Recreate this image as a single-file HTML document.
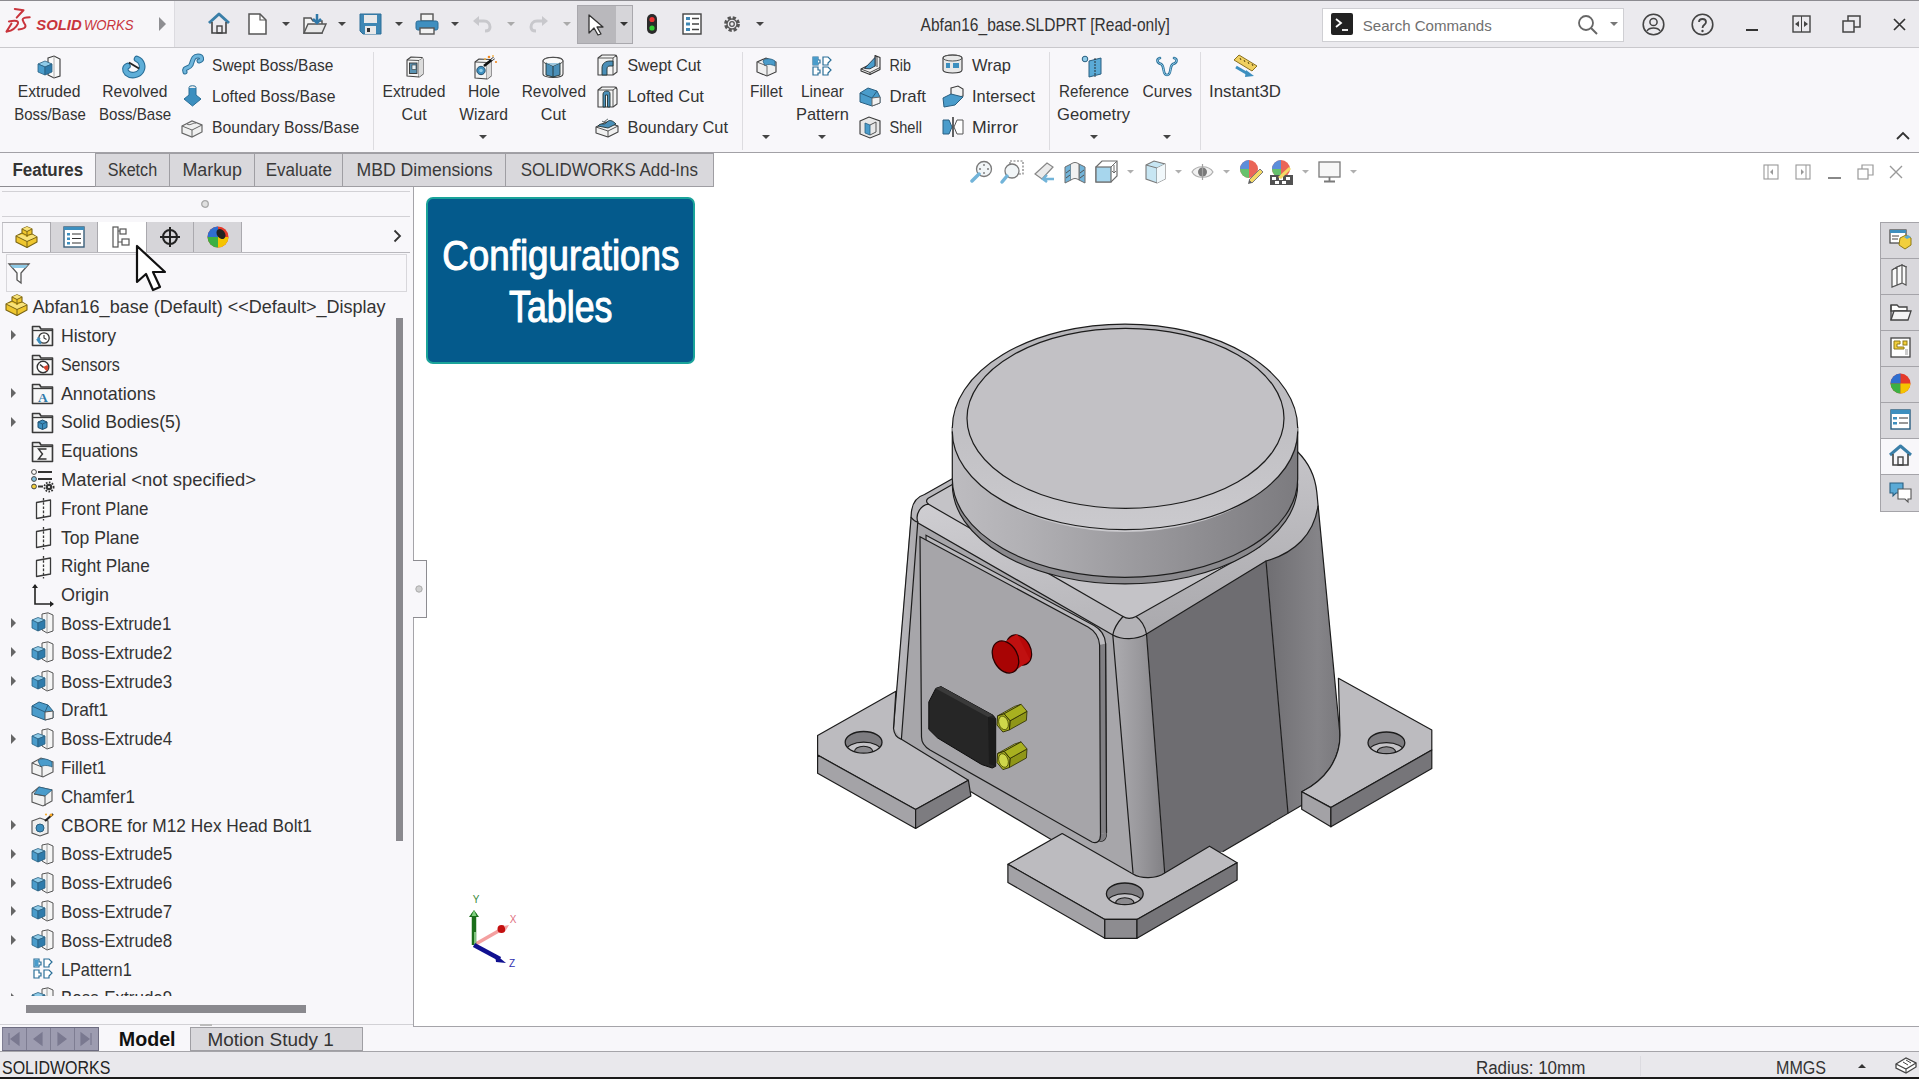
<!DOCTYPE html><html><head><meta charset="utf-8"><style>
html,body{margin:0;padding:0;width:1919px;height:1079px;overflow:hidden;background:#fff;position:relative}
.t{position:absolute;white-space:nowrap;font-family:"Liberation Sans",sans-serif;line-height:1;transform-origin:0 0}
svg{overflow:visible}
</style></head><body>
<div style="position:absolute;left:0px;top:0px;width:1919px;height:48px;background:#ebeaee;"></div>
<div style="position:absolute;left:0px;top:0px;width:1919px;height:1px;background:#8c8b90;"></div>
<div style="position:absolute;left:0px;top:1px;width:174px;height:46px;background:#f7f6f9;"></div>
<div style="position:absolute;left:174px;top:1px;width:1px;height:46px;background:#dcdbe0;"></div>
<div style="position:absolute;left:0px;top:47px;width:1919px;height:1px;background:#c9c8cc;"></div>
<svg style="position:absolute;left:0px;top:0px;" width="32" height="34" viewBox="0 0 32 34"><g fill="none" stroke="#c9343c" stroke-width="2" stroke-linecap="round" stroke-linejoin="round"><path d="M14.8 9 L23.5 10.3 Q20 14 16.7 17.6"/><path d="M8.9 21.4 Q19.5 19.3 17.8 23.8 Q15 30 7 31.5 M11.5 23.5 L6.5 31.6"/><path d="M29.7 17.2 Q22.5 17.2 22.6 19.8 Q23.5 22.5 25.3 25 Q26.6 28.8 18.6 29.4"/></g></svg>
<svg style="position:absolute;left:159px;top:17px;" width="8" height="14" viewBox="0 0 8 14"><path d="M0 0L7 7L0 14Z" fill="#8e8e92"/></svg>
<svg style="position:absolute;left:207px;top:12px;" width="24" height="23" viewBox="0 0 24 23"><path d="M2 11L12 2L22 11" fill="none" stroke="#3a7fa8" stroke-width="3" stroke-linejoin="round"/><path d="M5 10V21H19V10" fill="none" stroke="#444" stroke-width="1.6"/><rect x="10" y="14" width="5" height="7" fill="none" stroke="#444" stroke-width="1.4"/></svg>
<svg style="position:absolute;left:248px;top:13px;" width="19" height="22" viewBox="0 0 19 22"><path d="M1 1H12L18 7V21H1Z" fill="#fff" stroke="#555" stroke-width="1.5"/><path d="M12 1V7H18" fill="none" stroke="#555" stroke-width="1.2"/></svg>
<svg style="position:absolute;left:282px;top:22px;" width="8" height="4" viewBox="0 0 8 4"><path d="M0 0H8L4 4Z" fill="#444"/></svg>
<svg style="position:absolute;left:303px;top:13px;" width="24" height="22" viewBox="0 0 24 22"><path d="M1 5H8L10 8H19V20H1Z" fill="#f4f4f4" stroke="#555" stroke-width="1.5"/><path d="M1 20L5 11H23L19 20Z" fill="#e8e8e8" stroke="#555" stroke-width="1.4"/><path d="M14 1V9M10 6L14 10L18 6" fill="none" stroke="#2f78a8" stroke-width="2.5"/></svg>
<svg style="position:absolute;left:338px;top:22px;" width="8" height="4" viewBox="0 0 8 4"><path d="M0 0H8L4 4Z" fill="#444"/></svg>
<svg style="position:absolute;left:359px;top:13px;" width="23" height="22" viewBox="0 0 23 22"><path d="M1 1H22V21H4L1 18Z" fill="#3f87b4" stroke="#2d6f98" stroke-width="1"/><rect x="5" y="2" width="13" height="8" fill="#e9e9ea"/><rect x="6" y="13" width="11" height="8" fill="#e9e9ea"/><rect x="8" y="15" width="3" height="4" fill="#333"/></svg>
<svg style="position:absolute;left:395px;top:22px;" width="8" height="4" viewBox="0 0 8 4"><path d="M0 0H8L4 4Z" fill="#444"/></svg>
<svg style="position:absolute;left:415px;top:13px;" width="24" height="22" viewBox="0 0 24 22"><rect x="6" y="1" width="12" height="7" fill="#f2f2f2" stroke="#555" stroke-width="1.4"/><rect x="1" y="8" width="22" height="9" rx="2" fill="#3f8fc0" stroke="#2d6f98"/><rect x="5" y="15" width="14" height="6" fill="#f2f2f2" stroke="#555" stroke-width="1.4"/></svg>
<svg style="position:absolute;left:451px;top:22px;" width="8" height="4" viewBox="0 0 8 4"><path d="M0 0H8L4 4Z" fill="#444"/></svg>
<svg style="position:absolute;left:472px;top:15px;" width="20" height="17" viewBox="0 0 20 17"><path d="M4 6H12C16 6 18 9 18 12C18 15 16 16 13 16" fill="none" stroke="#c8c8cc" stroke-width="3"/><path d="M1 6L7 1V11Z" fill="#c8c8cc"/></svg>
<svg style="position:absolute;left:507px;top:22px;" width="8" height="4" viewBox="0 0 8 4"><path d="M0 0H8L4 4Z" fill="#aaa"/></svg>
<svg style="position:absolute;left:529px;top:15px;" width="20" height="17" viewBox="0 0 20 17"><path d="M16 6H8C4 6 2 9 2 12C2 15 4 16 7 16" fill="none" stroke="#c8c8cc" stroke-width="3"/><path d="M19 6L13 1V11Z" fill="#c8c8cc"/></svg>
<svg style="position:absolute;left:563px;top:22px;" width="8" height="4" viewBox="0 0 8 4"><path d="M0 0H8L4 4Z" fill="#aaa"/></svg>
<div style="position:absolute;left:577px;top:5px;width:56px;height:39px;background:#d6d5d9;border:1px solid #a9a8ad;box-sizing:border-box;"></div>
<div style="position:absolute;left:578px;top:6px;width:38px;height:37px;background:#b9b8bc;"></div>
<svg style="position:absolute;left:588px;top:14px;" width="16" height="22" viewBox="0 0 16 22"><path d="M1 1V19L6 14L10 21L13 20L9 13H15Z" fill="#fff" stroke="#333" stroke-width="1.3" stroke-linejoin="round"/></svg>
<svg style="position:absolute;left:620px;top:22px;" width="8" height="4" viewBox="0 0 8 4"><path d="M0 0H8L4 4Z" fill="#333"/></svg>
<svg style="position:absolute;left:646px;top:13px;" width="12" height="22" viewBox="0 0 12 22"><rect x="1" y="1" width="10" height="20" rx="5" fill="#2b2b2b"/><circle cx="6" cy="6.5" r="2.6" fill="#e33"/><circle cx="6" cy="15" r="2.6" fill="#3c3"/></svg>
<svg style="position:absolute;left:682px;top:13px;" width="20" height="22" viewBox="0 0 20 22"><rect x="1" y="1" width="18" height="20" fill="#fff" stroke="#444" stroke-width="1.4"/><rect x="4" y="4" width="4" height="3" fill="#3f87b4"/><rect x="4" y="9.5" width="4" height="3" fill="#3f87b4"/><rect x="4" y="15" width="4" height="3" fill="#3f87b4"/><path d="M10 5.5H17M10 11H17M10 16.5H17" stroke="#444" stroke-width="1.3"/></svg>
<svg style="position:absolute;left:721px;top:13px;" width="22" height="22" viewBox="0 0 22 22"><circle cx="11" cy="11" r="6.5" fill="none" stroke="#555" stroke-width="2.8" stroke-dasharray="3.2 1.9"/><circle cx="11" cy="11" r="5" fill="none" stroke="#555" stroke-width="1.3"/><circle cx="11" cy="11" r="2.3" fill="none" stroke="#555" stroke-width="1.3"/></svg>
<svg style="position:absolute;left:756px;top:22px;" width="8" height="4" viewBox="0 0 8 4"><path d="M0 0H8L4 4Z" fill="#444"/></svg>
<div style="position:absolute;left:1322px;top:8px;width:302px;height:34px;background:#fff;border:1px solid #cfcfd3;box-sizing:border-box;"></div>
<svg style="position:absolute;left:1331px;top:13px;" width="22" height="22" viewBox="0 0 22 22"><rect x="0" y="0" width="22" height="22" rx="2" fill="#222"/><path d="M5 6L10 10L5 14" fill="none" stroke="#fff" stroke-width="1.8"/><path d="M11 17H17" stroke="#fff" stroke-width="1.8"/></svg>
<svg style="position:absolute;left:1577px;top:14px;" width="24" height="22" viewBox="0 0 24 22"><circle cx="9" cy="9" r="7" fill="none" stroke="#666" stroke-width="1.8"/><path d="M14 14L20 20" stroke="#666" stroke-width="2"/></svg>
<svg style="position:absolute;left:1610px;top:22px;" width="8" height="4" viewBox="0 0 8 4"><path d="M0 0H8L4 4Z" fill="#777"/></svg>
<svg style="position:absolute;left:1642px;top:13px;" width="23" height="23" viewBox="0 0 23 23"><circle cx="11.5" cy="11.5" r="10.3" fill="none" stroke="#444" stroke-width="1.6"/><circle cx="11.5" cy="9" r="3.6" fill="none" stroke="#444" stroke-width="1.5"/><path d="M5 18C7 14 16 14 18 18" fill="none" stroke="#444" stroke-width="1.5"/></svg>
<svg style="position:absolute;left:1691px;top:13px;" width="23" height="23" viewBox="0 0 23 23"><circle cx="11.5" cy="11.5" r="10.3" fill="none" stroke="#444" stroke-width="1.6"/><path d="M8 9C8 5 15 5 15 9C15 12 11.5 11.5 11.5 15" fill="none" stroke="#444" stroke-width="1.8"/><circle cx="11.5" cy="18" r="1.2" fill="#444"/></svg>
<div style="position:absolute;left:1746px;top:29px;width:12px;height:2px;background:#333;"></div>
<svg style="position:absolute;left:1792px;top:15px;" width="19" height="18" viewBox="0 0 19 18"><rect x="1" y="1" width="17" height="16" fill="none" stroke="#444" stroke-width="1.4"/><path d="M9.5 1V17" stroke="#444" stroke-width="1"/><path d="M3 9L7 6V12Z M16 9L12 6V12Z" fill="#444"/></svg>
<svg style="position:absolute;left:1842px;top:15px;" width="19" height="18" viewBox="0 0 19 18"><rect x="1" y="6" width="11" height="11" fill="none" stroke="#444" stroke-width="1.5"/><path d="M6 6V1H18V12H12" fill="none" stroke="#444" stroke-width="1.5"/></svg>
<svg style="position:absolute;left:1893px;top:18px;" width="13" height="13" viewBox="0 0 13 13"><path d="M1 1L12 12M12 1L1 12" stroke="#333" stroke-width="1.7"/></svg>
<div style="position:absolute;left:0px;top:48px;width:1919px;height:105px;background:#f8f7fa;"></div>
<div style="position:absolute;left:373px;top:52px;width:1px;height:98px;background:#dddce0;"></div>
<div style="position:absolute;left:742px;top:52px;width:1px;height:98px;background:#dddce0;"></div>
<div style="position:absolute;left:1049px;top:52px;width:1px;height:98px;background:#dddce0;"></div>
<div style="position:absolute;left:1200px;top:52px;width:1px;height:98px;background:#dddce0;"></div>
<svg style="position:absolute;left:37px;top:55px;" width="25" height="23" viewBox="0 0 25 23"><path d="M11 3L17 1L23 4V21L17 23L11 20Z" fill="#fafafa" stroke="#3a3a3a" stroke-width="1.1"/><path d="M17 1V23" stroke="#999" stroke-width="0.8"/><path d="M1 9L8 6L15 9L8 12Z" fill="#8fcbe8" stroke="#2a5f80" stroke-width="0.8"/><path d="M1 9L8 12V20L1 17Z" fill="#4a9ccb" stroke="#2a5f80" stroke-width="0.8"/><path d="M8 12L15 9V17L8 20Z" fill="#2f7bab" stroke="#2a5f80" stroke-width="0.8"/></svg>
<svg style="position:absolute;left:122px;top:54px;" width="24" height="25" viewBox="0 0 24 25"><path d="M15 5 C20 7 21.5 13 19 17 C16 21.5 9 22.5 5 19 C2.5 16.5 3 13 5.5 12" fill="none" stroke="#2a6f98" stroke-width="6.6" stroke-linecap="round"/><path d="M15 5 C20 7 21.5 13 19 17 C16 21.5 9 22.5 5 19 C2.5 16.5 3 13 5.5 12" fill="none" stroke="#5eaed8" stroke-width="4.4" stroke-linecap="round"/><path d="M7 8.5 L17 14.5" stroke="#222" stroke-width="1.9"/></svg>
<svg style="position:absolute;left:181px;top:53px;" width="23" height="23" viewBox="0 0 23 23"><path d="M4 19C2 14 8 16 10 12C12 7 12 3 17 3C21 3 22 7 18 8" fill="none" stroke="#2a6f98" stroke-width="5" stroke-linecap="round"/><path d="M4 19C2 14 8 16 10 12C12 7 12 3 17 3C21 3 22 7 18 8" fill="none" stroke="#6fb6dc" stroke-width="3" stroke-linecap="round"/></svg>
<svg style="position:absolute;left:183px;top:85px;" width="19" height="22" viewBox="0 0 19 22"><ellipse cx="9.5" cy="2.5" rx="3.5" ry="1.8" fill="#eee" stroke="#2a6f98"/><path d="M6 3V10L1 14L9.5 21L18 14L13 10V3" fill="#3d8fbf" stroke="#2a6f98" stroke-width="1"/></svg>
<svg style="position:absolute;left:180px;top:116px;" width="24" height="22" viewBox="0 0 24 22"><path d="M2 10L12 5L22 9V16L12 21L2 17Z" fill="#f0f0f0" stroke="#666" stroke-width="1.2"/><path d="M2 10L12 14L22 9M12 14V21M7 8C10 10 12 7 16 7" fill="none" stroke="#666" stroke-width="1"/></svg>
<svg style="position:absolute;left:404px;top:55px;" width="22" height="24" viewBox="0 0 22 24"><path d="M3 5 L7 2 L18 2.5 L19 4 V19 L15 22 L3 21 Z" fill="#f4f4f4" stroke="#444" stroke-width="1.1" stroke-linejoin="round"/><path d="M3 5 L15 5.5 L19 3 M15 5.5 V22" fill="none" stroke="#444" stroke-width="0.9"/><path d="M15 5.5 L19 3 V19 L15 22 Z" fill="#dcdcdc"/><rect x="5.5" y="8" width="7.5" height="10.5" fill="#5b93b3" stroke="#333" stroke-width="0.9"/><rect x="8" y="10" width="4" height="4.5" fill="#e8f2f8" stroke="#333" stroke-width="0.6"/></svg>
<svg style="position:absolute;left:472px;top:55px;" width="26" height="25" viewBox="0 0 26 25"><g transform="translate(0 2)"><path d="M3 5 L7 2 L18 2.5 L19 4 V19 L15 22 L3 21 Z" fill="#f4f4f4" stroke="#444" stroke-width="1.1" stroke-linejoin="round"/><path d="M3 5 L15 5.5 L19 3 M15 5.5 V22" fill="none" stroke="#444" stroke-width="0.9"/><path d="M15 5.5 L19 3 V19 L15 22 Z" fill="#dcdcdc"/><circle cx="9" cy="13.5" r="4.2" fill="#3d8fbf" stroke="#2a4f6a" stroke-width="1"/><circle cx="9" cy="13.5" r="1.8" fill="#8fcbe8"/></g><path d="M12 11 L22 3" stroke="#111" stroke-width="2.6"/><path d="M19.5 5 L22 3" stroke="#f0f0f0" stroke-width="1.5"/><circle cx="17" cy="2" r="1.3" fill="#f08a24"/><circle cx="24" cy="7" r="1.1" fill="#f08a24"/><circle cx="21" cy="1" r="0.9" fill="#f5b041"/><circle cx="13" cy="4" r="1" fill="#f5b041"/></svg>
<svg style="position:absolute;left:479px;top:135px;" width="8" height="4" viewBox="0 0 8 4"><path d="M0 0H8L4 4Z" fill="#444"/></svg>
<svg style="position:absolute;left:541px;top:55px;" width="24" height="24" viewBox="0 0 24 24"><path d="M2 6 C2 1 22 1 22 6 V19 C22 23.5 2 23.5 2 19 Z" fill="#f4f4f4" stroke="#444" stroke-width="1.1"/><ellipse cx="12" cy="6" rx="10" ry="3.6" fill="#fafafa" stroke="#444" stroke-width="0.9"/><path d="M5 8 L12 11 L19 8 V20 L12 22 L5 20 Z" fill="#4a8fb8" stroke="#233" stroke-width="0.9"/><path d="M12 11 V22" stroke="#233" stroke-width="0.9"/><path d="M5 8 L12 11 L19 8" fill="#9cc8e0"/></svg>
<svg style="position:absolute;left:596px;top:53px;" width="23" height="24" viewBox="0 0 23 24"><path d="M2 5 L6 2 L19 2 L21 4 V19 L17 22 L2 22 Z" fill="#f4f4f4" stroke="#444" stroke-width="1.1" stroke-linejoin="round"/><path d="M2 5 H17 L21 2 M17 5 V22" fill="none" stroke="#444" stroke-width="0.9"/><path d="M6 22 V15 C6 10 10 8 14 8 H17 V13 H14 C12 13 11 14 11 16 V22 Z" fill="#4a8fb8" stroke="#233" stroke-width="0.9"/></svg>
<svg style="position:absolute;left:596px;top:85px;" width="23" height="24" viewBox="0 0 23 24"><path d="M2 5 L6 2 L19 2 L21 4 V19 L17 22 L2 22 Z" fill="#f4f4f4" stroke="#444" stroke-width="1.1" stroke-linejoin="round"/><path d="M2 5 H17 L21 2 M17 5 V22" fill="none" stroke="#444" stroke-width="0.9"/><path d="M7 22 V9 C7 7 9 6 11 6 C13 6 14 7 14 9 V22 H11.5 V10 H9.5 V22 Z" fill="#4a8fb8" stroke="#233" stroke-width="0.9"/></svg>
<svg style="position:absolute;left:594px;top:115px;" width="26" height="24" viewBox="0 0 26 24"><path d="M2 12 L12 7 L24 11 V17 L14 22 L2 18 Z" fill="#f0f0f0" stroke="#444" stroke-width="1.1" stroke-linejoin="round"/><path d="M2 12 L14 16 L24 11 M14 16 V22" fill="none" stroke="#444" stroke-width="0.9"/><path d="M4 11 C7 7 10 11 13 7 C16 4 19 6 22 9 L14 13 Z" fill="#4a8fb8" stroke="#233" stroke-width="0.9"/><path d="M8 6 C10 8 12 5 14 4" fill="none" stroke="#233" stroke-width="0.8"/></svg>
<svg style="position:absolute;left:755px;top:55px;" width="23" height="22" viewBox="0 0 23 22"><path d="M2 7L11 3L21 7V17L12 21L2 17Z" fill="#f0f0f0" stroke="#3a3a3a" stroke-width="1.1"/><path d="M8 6C10 3 16 3 20 6V11C16 9 12 9 10 11Z" fill="#4a9ccb" stroke="#2a5f80" stroke-width="0.8"/><path d="M2 7L12 11V21" fill="none" stroke="#666"/></svg>
<svg style="position:absolute;left:762px;top:135px;" width="8" height="4" viewBox="0 0 8 4"><path d="M0 0H8L4 4Z" fill="#444"/></svg>
<svg style="position:absolute;left:811px;top:55px;" width="21" height="22" viewBox="0 0 21 22"><path d="M2 2H7V5H9V8H7V10H2Z M12 2H17L20 5L17 8V10H12Z M2 12H7V15H9V18H7V20H2Z M12 12H17L20 15L17 18V20H12Z" fill="#fff" stroke="#2a6f98" stroke-width="1.2"/><rect x="2" y="2" width="5" height="8" fill="#4a9ccb"/></svg>
<svg style="position:absolute;left:818px;top:135px;" width="8" height="4" viewBox="0 0 8 4"><path d="M0 0H8L4 4Z" fill="#444"/></svg>
<svg style="position:absolute;left:859px;top:53px;" width="23" height="24" viewBox="0 0 23 24"><path d="M2 16 L12 11 L16 13 V2.5 L21 4.5 V16.5 L11 21.5 L2 18 Z" fill="#f2f2f2" stroke="#333" stroke-width="1.1" stroke-linejoin="round"/><path d="M2 16 L11 19.5 L21 14.5 M11 19.5 V21.5 M16 2.5 L18 4 V14" fill="none" stroke="#333" stroke-width="0.9"/><path d="M5.5 15.5 L16 4.5 V13 L11 15.8 Z" fill="#4a9ccb" stroke="#234" stroke-width="0.9"/></svg>
<svg style="position:absolute;left:858px;top:85px;" width="24" height="22" viewBox="0 0 24 22"><path d="M2 8L10 3L19 6L22 12V18L14 21L2 17Z" fill="#4a9ccb" stroke="#2a5f80" stroke-width="1"/><path d="M14 13V21L22 18V12Z" fill="#f2f2f2" stroke="#666"/><path d="M2 8L14 13L19 6" fill="none" stroke="#2a5f80"/></svg>
<svg style="position:absolute;left:858px;top:116px;" width="24" height="23" viewBox="0 0 24 23"><path d="M2 5L11 1L22 5V18L12 22L2 18Z" fill="#e8e8e8" stroke="#3a3a3a" stroke-width="1.1"/><path d="M7 7L12 9V19L7 17Z" fill="#4a9ccb" stroke="#2a5f80" stroke-width="0.8"/><path d="M12 9L18 6V16L12 19" fill="none" stroke="#555"/></svg>
<svg style="position:absolute;left:941px;top:53px;" width="23" height="22" viewBox="0 0 23 22"><path d="M2 5C2 1 21 1 21 5V17C21 21 2 21 2 17Z" fill="#e8e8e8" stroke="#3a3a3a" stroke-width="1.1"/><ellipse cx="11.5" cy="5" rx="9.5" ry="3" fill="none" stroke="#555"/><path d="M5 10H9V15H5Z M12 10H18V15H12Z" fill="#3d8fbf"/></svg>
<svg style="position:absolute;left:942px;top:85px;" width="23" height="23" viewBox="0 0 23 23"><path d="M9 3L16 1L21 4V11L14 13L9 10Z" fill="#f2f2f2" stroke="#3a3a3a" stroke-width="1.1"/><path d="M1 13L9 9L21 12L13 20L2 22Z" fill="#4a9ccb" stroke="#2a5f80" stroke-width="1"/></svg>
<svg style="position:absolute;left:942px;top:116px;" width="22" height="22" viewBox="0 0 22 22"><path d="M1 4H7L10 11L7 18H1Z" fill="#4a9ccb" stroke="#2a5f80" stroke-width="1"/><path d="M11 1V21" stroke="#222" stroke-width="1.4"/><path d="M21 4H15L12 11L15 18H21Z" fill="#fff" stroke="#555" stroke-width="1"/></svg>
<svg style="position:absolute;left:1081px;top:55px;" width="24" height="22" viewBox="0 0 24 22"><circle cx="4" cy="4" r="2.8" fill="#8fcbe8" stroke="#2a5f80" stroke-width="1"/><path d="M8 6L20 3V19L8 22Z" fill="#5aaad6" stroke="#2a5f80" stroke-width="1"/><path d="M14 3V22" stroke="#222" stroke-width="0.9" stroke-dasharray="2 1"/></svg>
<svg style="position:absolute;left:1090px;top:135px;" width="8" height="4" viewBox="0 0 8 4"><path d="M0 0H8L4 4Z" fill="#444"/></svg>
<svg style="position:absolute;left:1155px;top:54px;" width="24" height="24" viewBox="0 0 24 24"><path d="M5 4C1 5 2 9 6 10C10 12 7 21 12 21C17 21 14 12 18 10C22 9 23 5 19 4" fill="none" stroke="#2a6f98" stroke-width="2.6" stroke-linecap="round"/><path d="M5 4C1 5 2 9 6 10C10 12 7 21 12 21C17 21 14 12 18 10C22 9 23 5 19 4" fill="none" stroke="#8fcbe8" stroke-width="1" stroke-linecap="round"/></svg>
<svg style="position:absolute;left:1163px;top:135px;" width="8" height="4" viewBox="0 0 8 4"><path d="M0 0H8L4 4Z" fill="#444"/></svg>
<svg style="position:absolute;left:1232px;top:54px;" width="26" height="24" viewBox="0 0 26 24"><path d="M2 6L7 1L25 12L20 17Z" fill="#f0d060" stroke="#8a7020" stroke-width="1"/><path d="M8 4L9 6M12 6L13 8M16 8L17 10M20 10L21 12" stroke="#5a4a10" stroke-width="1"/><path d="M4 13L16 20" stroke="#3d8fbf" stroke-width="3"/><path d="M14 16L22 22L13 23Z" fill="#3d8fbf"/></svg>
<svg style="position:absolute;left:1896px;top:131px;" width="14" height="9" viewBox="0 0 14 9"><path d="M1 8L7 2L13 8" fill="none" stroke="#333" stroke-width="1.8"/></svg>
<div style="position:absolute;left:413px;top:153px;width:1506px;height:874px;background:#ffffff;"></div>
<div style="position:absolute;left:0px;top:153px;width:413px;height:874px;background:#f8f7fa;"></div>
<div style="position:absolute;left:413px;top:187px;width:1px;height:840px;background:#a5a4a9;"></div>
<div style="position:absolute;left:0px;top:152px;width:1919px;height:1px;background:#a2a1a6;"></div>
<div style="position:absolute;left:0px;top:186px;width:413px;height:1px;background:#8d8c91;"></div>
<div style="position:absolute;left:95px;top:153px;width:75px;height:34px;background:#d9d8dc;border:1px solid #9f9ea3;box-sizing:border-box;"></div>
<div style="position:absolute;left:169px;top:153px;width:86px;height:34px;background:#d9d8dc;border:1px solid #9f9ea3;box-sizing:border-box;"></div>
<div style="position:absolute;left:254px;top:153px;width:89px;height:34px;background:#d9d8dc;border:1px solid #9f9ea3;box-sizing:border-box;"></div>
<div style="position:absolute;left:342px;top:153px;width:164px;height:34px;background:#d9d8dc;border:1px solid #9f9ea3;box-sizing:border-box;"></div>
<div style="position:absolute;left:505px;top:153px;width:209px;height:34px;background:#d9d8dc;border:1px solid #9f9ea3;box-sizing:border-box;"></div>
<div style="position:absolute;left:2px;top:191px;width:408px;height:1px;background:#d2d1d5;"></div>
<svg style="position:absolute;left:200px;top:199px;" width="10" height="10" viewBox="0 0 10 10"><circle cx="5" cy="5" r="3.3" fill="#e0e0e0" stroke="#a8a8a8" stroke-width="1.3"/></svg>
<div style="position:absolute;left:2px;top:216px;width:408px;height:1px;background:#d2d1d5;"></div>
<div style="position:absolute;left:2px;top:222px;width:1px;height:31px;background:#c8c7cc;"></div>
<div style="position:absolute;left:2px;top:222px;width:240px;height:1px;background:#b9b8bd;"></div>
<div style="position:absolute;left:50px;top:222px;width:48px;height:31px;background:#d6d5d9;border-left:1px solid #aaa9ae;border-right:1px solid #aaa9ae;box-sizing:border-box;"></div>
<div style="position:absolute;left:98px;top:222px;width:48px;height:31px;background:#ffffff;"></div>
<div style="position:absolute;left:146px;top:222px;width:96px;height:31px;background:#d6d5d9;border-left:1px solid #aaa9ae;border-right:1px solid #aaa9ae;box-sizing:border-box;"></div>
<div style="position:absolute;left:193px;top:222px;width:1px;height:31px;background:#aaa9ae;"></div>
<div style="position:absolute;left:2px;top:252px;width:408px;height:1px;background:#b9b8bd;"></div>
<svg style="position:absolute;left:15px;top:226px;" width="24" height="23" viewBox="0 0 24 23"><path d="M1 10 L7 7 V3 L12 0.8 L17 3 V8 L22 11 V16 L12 21.5 L1 16 Z" fill="#efc62e" stroke="#7a6414" stroke-width="1.1" stroke-linejoin="round"/><path d="M1 10 L12 15.5 L22 11 L17 8.5 L12 11 L7 8.5 Z" fill="#f8e27a"/><path d="M7 3 L12 5.5 L17 3 L12 0.8 Z" fill="#f8e27a"/><path d="M1 10 L12 15.5 L22 11 M12 15.5 V21.5 M7 7 L12 9.5 L17 8 M12 9.5 V11 M7 3 L12 5.5 L17 3 M12 5.5 V9.5" fill="none" stroke="#7a6414" stroke-width="1"/></svg>
<svg style="position:absolute;left:63px;top:226px;" width="22" height="22" viewBox="0 0 22 22"><rect x="1" y="1" width="20" height="20" fill="#fff" stroke="#3a5f7a" stroke-width="1.4"/><rect x="1" y="1" width="20" height="3" fill="#3d8fbf"/><rect x="4" y="7" width="3" height="2.5" fill="#3d8fbf"/><rect x="4" y="11.5" width="3" height="2.5" fill="#3d8fbf"/><rect x="4" y="16" width="3" height="2.5" fill="#3d8fbf"/><path d="M9 8H18M9 12.5H18M9 17H18" stroke="#333" stroke-width="1.2"/></svg>
<svg style="position:absolute;left:112px;top:226px;" width="20" height="22" viewBox="0 0 20 22"><rect x="1" y="1" width="5" height="20" fill="none" stroke="#555" stroke-width="1.2"/><rect x="8" y="3" width="6" height="5" fill="#fff" stroke="#555" stroke-width="1.2"/><rect x="10" y="13" width="7" height="6" fill="#fff" stroke="#555" stroke-width="1.2"/><path d="M6 5H8M6 16H10" stroke="#555"/></svg>
<svg style="position:absolute;left:159px;top:226px;" width="22" height="22" viewBox="0 0 22 22"><circle cx="11" cy="11" r="7" fill="none" stroke="#222" stroke-width="2"/><path d="M11 1V21M1 11H21" stroke="#222" stroke-width="2"/></svg>
<svg style="position:absolute;left:206px;top:225px;" width="24" height="24" viewBox="0 0 24 24"><circle cx="12" cy="12" r="10.5" fill="#e53a2a"/><path d="M12 12L12 1.5A10.5 10.5 0 0 0 1.5 12Z" fill="#2f6fd0"/><path d="M12 12L1.5 12A10.5 10.5 0 0 0 12 22.5Z" fill="#3cb043"/><path d="M12 12L12 22.5A10.5 10.5 0 0 0 22.5 12Z" fill="#f5c400"/><ellipse cx="15" cy="9" rx="4" ry="5.5" fill="#222" transform="rotate(-35 15 9)"/></svg>
<svg style="position:absolute;left:393px;top:229px;" width="9" height="14" viewBox="0 0 9 14"><path d="M1.5 1.5L7 7L1.5 12.5" fill="none" stroke="#333" stroke-width="1.8"/></svg>
<div style="position:absolute;left:6px;top:254px;width:401px;height:38px;background:#f8f7fa;border:1px solid #d8d7db;box-sizing:border-box;"></div>
<svg style="position:absolute;left:8px;top:262px;" width="23" height="22" viewBox="0 0 23 22"><path d="M1 2H21L13 11V21L9 18V11Z" fill="#fff" stroke="#555" stroke-width="1.3"/><path d="M2 3H20L17 6H5Z" fill="#8fcbe8"/></svg>
<svg style="position:absolute;left:5px;top:294px;" width="24" height="23" viewBox="0 0 24 23"><path d="M1 10 L7 7 V3 L12 0.8 L17 3 V8 L22 11 V16 L12 21.5 L1 16 Z" fill="#efc62e" stroke="#7a6414" stroke-width="1.1" stroke-linejoin="round"/><path d="M1 10 L12 15.5 L22 11 L17 8.5 L12 11 L7 8.5 Z" fill="#f8e27a"/><path d="M7 3 L12 5.5 L17 3 L12 0.8 Z" fill="#f8e27a"/><path d="M1 10 L12 15.5 L22 11 M12 15.5 V21.5 M7 7 L12 9.5 L17 8 M12 9.5 V11 M7 3 L12 5.5 L17 3 M12 5.5 V9.5" fill="none" stroke="#7a6414" stroke-width="1"/></svg>
<div style="position:absolute;left:0;top:0;width:413px;height:996px;overflow:hidden"><svg style="position:absolute;left:10px;top:330px;" width="7" height="10" viewBox="0 0 7 10"><path d="M1 0L6 5L1 10Z" fill="#666"/></svg>
<svg style="position:absolute;left:31px;top:324px;" width="23" height="23" viewBox="0 0 23 23"><path d="M1.5 2.5H8.5L10 5H21.5V21.5H1.5Z" fill="#ececec" stroke="#3a3a3a" stroke-width="1.6" stroke-linejoin="round"/><path d="M1.5 6.5H21.5" stroke="#3a3a3a" stroke-width="1.2"/><rect x="3" y="8" width="17" height="12" fill="#f8f8f8"/><circle cx="13" cy="14" r="5.2" fill="#fff" stroke="#333" stroke-width="1.3"/><path d="M13 11V14L15.5 15.5" fill="none" stroke="#333" stroke-width="1.1"/><path d="M7.5 13.5C7 16 8 18 10 19.5" fill="none" stroke="#3d8fbf" stroke-width="2.4"/><path d="M5 15.5L8 19L9.5 14Z" fill="#3d8fbf"/></svg>
<svg style="position:absolute;left:31px;top:353px;" width="23" height="23" viewBox="0 0 23 23"><path d="M1.5 2.5H8.5L10 5H21.5V21.5H1.5Z" fill="#ececec" stroke="#3a3a3a" stroke-width="1.6" stroke-linejoin="round"/><path d="M1.5 6.5H21.5" stroke="#3a3a3a" stroke-width="1.2"/><rect x="3" y="8" width="17" height="12" fill="#f8f8f8"/><circle cx="12" cy="14" r="5.8" fill="#fff" stroke="#333" stroke-width="1.4"/><path d="M12 14L16.5 12A5 5 0 0 1 15.5 18.2Z" fill="#d9452f"/><path d="M9 11.5L12.5 14.5" stroke="#333" stroke-width="1.5"/></svg>
<svg style="position:absolute;left:10px;top:388px;" width="7" height="10" viewBox="0 0 7 10"><path d="M1 0L6 5L1 10Z" fill="#666"/></svg>
<svg style="position:absolute;left:31px;top:382px;" width="23" height="23" viewBox="0 0 23 23"><path d="M1.5 2.5H8.5L10 5H21.5V21.5H1.5Z" fill="#ececec" stroke="#3a3a3a" stroke-width="1.6" stroke-linejoin="round"/><path d="M1.5 6.5H21.5" stroke="#3a3a3a" stroke-width="1.2"/><rect x="3" y="8" width="17" height="12" fill="#f8f8f8"/><text x="11.8" y="20" font-family="Liberation Serif" font-size="13.5" font-weight="bold" fill="#2f7bab" text-anchor="middle">A</text></svg>
<svg style="position:absolute;left:10px;top:417px;" width="7" height="10" viewBox="0 0 7 10"><path d="M1 0L6 5L1 10Z" fill="#666"/></svg>
<svg style="position:absolute;left:31px;top:411px;" width="23" height="23" viewBox="0 0 23 23"><path d="M1.5 2.5H8.5L10 5H21.5V21.5H1.5Z" fill="#ececec" stroke="#3a3a3a" stroke-width="1.6" stroke-linejoin="round"/><path d="M1.5 6.5H21.5" stroke="#3a3a3a" stroke-width="1.2"/><rect x="3" y="8" width="17" height="12" fill="#f8f8f8"/><path d="M7 11L11.5 9L16 11V16.5L11.5 18.5L7 16.5Z" fill="#3d8fbf" stroke="#1f4f6f" stroke-width="1"/><path d="M7 11L11.5 13L16 11M11.5 13V18.5" fill="none" stroke="#1f4f6f" stroke-width="0.8"/></svg>
<svg style="position:absolute;left:31px;top:440px;" width="23" height="23" viewBox="0 0 23 23"><path d="M1.5 2.5H8.5L10 5H21.5V21.5H1.5Z" fill="#ececec" stroke="#3a3a3a" stroke-width="1.6" stroke-linejoin="round"/><path d="M1.5 6.5H21.5" stroke="#3a3a3a" stroke-width="1.2"/><rect x="3" y="8" width="17" height="12" fill="#f8f8f8"/><path d="M15.5 9H7.5L11.5 14L7.5 19H15.5" fill="none" stroke="#333" stroke-width="1.4"/></svg>
<svg style="position:absolute;left:30px;top:468px;" width="26" height="24" viewBox="0 0 26 24"><circle cx="4" cy="4" r="2.4" fill="#fff" stroke="#444"/><circle cx="4" cy="11" r="2.4" fill="#7fc0e0" stroke="#444"/><circle cx="4" cy="18.5" r="2.4" fill="#f2cf3c" stroke="#444"/><path d="M8 4H22M8 11H22M8 18.5H13" stroke="#333" stroke-width="1.8"/><circle cx="19" cy="19" r="3.2" fill="#333"/><circle cx="19" cy="19" r="4.6" fill="none" stroke="#333" stroke-width="1.8" stroke-dasharray="1.6 1.4"/><circle cx="19" cy="19" r="1.1" fill="#fff"/></svg>
<svg style="position:absolute;left:33px;top:497px;" width="22" height="23" viewBox="0 0 22 23"><path d="M3.5 5.5 L17.5 3 V19 L3.5 21.5 Z" fill="#fbfbfb" stroke="#3a3a3a" stroke-width="1.3" stroke-linejoin="round"/><path d="M10.5 1 V23.5" stroke="#3a3a3a" stroke-width="1.3" stroke-dasharray="2.6 1.6"/></svg>
<svg style="position:absolute;left:33px;top:526px;" width="22" height="23" viewBox="0 0 22 23"><path d="M3.5 5.5 L17.5 3 V19 L3.5 21.5 Z" fill="#fbfbfb" stroke="#3a3a3a" stroke-width="1.3" stroke-linejoin="round"/><path d="M10.5 1 V23.5" stroke="#3a3a3a" stroke-width="1.3" stroke-dasharray="2.6 1.6"/></svg>
<svg style="position:absolute;left:33px;top:555px;" width="22" height="23" viewBox="0 0 22 23"><path d="M3.5 5.5 L17.5 3 V19 L3.5 21.5 Z" fill="#fbfbfb" stroke="#3a3a3a" stroke-width="1.3" stroke-linejoin="round"/><path d="M10.5 1 V23.5" stroke="#3a3a3a" stroke-width="1.3" stroke-dasharray="2.6 1.6"/></svg>
<svg style="position:absolute;left:32px;top:584px;" width="23" height="23" viewBox="0 0 23 23"><path d="M3 1V20H21" fill="none" stroke="#222" stroke-width="1.6"/><path d="M0 4L3 0L6 4Z M18 17L22 20L18 23Z" fill="#222"/></svg>
<svg style="position:absolute;left:10px;top:618px;" width="7" height="10" viewBox="0 0 7 10"><path d="M1 0L6 5L1 10Z" fill="#666"/></svg>
<svg style="position:absolute;left:31px;top:612px;" width="24" height="22" viewBox="0 0 24 22"><path d="M11 2L17 0.8L22 3V19L16 21L11 18Z" fill="#f5f5f5" stroke="#555" stroke-width="1"/><path d="M16 1V21" stroke="#888" stroke-width="0.8"/><path d="M1 8L7 5.5L14 8L7 11Z" fill="#8fcbe8" stroke="#2a5f80" stroke-width="0.8"/><path d="M1 8L7 11V19L1 16Z" fill="#4a9ccb" stroke="#2a5f80" stroke-width="0.8"/><path d="M7 11L14 8V16L7 19Z" fill="#2f7bab" stroke="#2a5f80" stroke-width="0.8"/></svg>
<svg style="position:absolute;left:10px;top:647px;" width="7" height="10" viewBox="0 0 7 10"><path d="M1 0L6 5L1 10Z" fill="#666"/></svg>
<svg style="position:absolute;left:31px;top:641px;" width="24" height="22" viewBox="0 0 24 22"><path d="M11 2L17 0.8L22 3V19L16 21L11 18Z" fill="#f5f5f5" stroke="#555" stroke-width="1"/><path d="M16 1V21" stroke="#888" stroke-width="0.8"/><path d="M1 8L7 5.5L14 8L7 11Z" fill="#8fcbe8" stroke="#2a5f80" stroke-width="0.8"/><path d="M1 8L7 11V19L1 16Z" fill="#4a9ccb" stroke="#2a5f80" stroke-width="0.8"/><path d="M7 11L14 8V16L7 19Z" fill="#2f7bab" stroke="#2a5f80" stroke-width="0.8"/></svg>
<svg style="position:absolute;left:10px;top:676px;" width="7" height="10" viewBox="0 0 7 10"><path d="M1 0L6 5L1 10Z" fill="#666"/></svg>
<svg style="position:absolute;left:31px;top:670px;" width="24" height="22" viewBox="0 0 24 22"><path d="M11 2L17 0.8L22 3V19L16 21L11 18Z" fill="#f5f5f5" stroke="#555" stroke-width="1"/><path d="M16 1V21" stroke="#888" stroke-width="0.8"/><path d="M1 8L7 5.5L14 8L7 11Z" fill="#8fcbe8" stroke="#2a5f80" stroke-width="0.8"/><path d="M1 8L7 11V19L1 16Z" fill="#4a9ccb" stroke="#2a5f80" stroke-width="0.8"/><path d="M7 11L14 8V16L7 19Z" fill="#2f7bab" stroke="#2a5f80" stroke-width="0.8"/></svg>
<svg style="position:absolute;left:31px;top:699px;" width="24" height="22" viewBox="0 0 24 22"><path d="M1 7L8 3L17 6L22 12V19L14 21L1 16Z" fill="#4a9ccb" stroke="#2a5f80" stroke-width="1"/><path d="M14 13V21L22 19V12Z" fill="#f2f2f2" stroke="#555"/><path d="M1 7L14 13L17 6" fill="none" stroke="#2a5f80"/></svg>
<svg style="position:absolute;left:10px;top:734px;" width="7" height="10" viewBox="0 0 7 10"><path d="M1 0L6 5L1 10Z" fill="#666"/></svg>
<svg style="position:absolute;left:31px;top:728px;" width="24" height="22" viewBox="0 0 24 22"><path d="M11 2L17 0.8L22 3V19L16 21L11 18Z" fill="#f5f5f5" stroke="#555" stroke-width="1"/><path d="M16 1V21" stroke="#888" stroke-width="0.8"/><path d="M1 8L7 5.5L14 8L7 11Z" fill="#8fcbe8" stroke="#2a5f80" stroke-width="0.8"/><path d="M1 8L7 11V19L1 16Z" fill="#4a9ccb" stroke="#2a5f80" stroke-width="0.8"/><path d="M7 11L14 8V16L7 19Z" fill="#2f7bab" stroke="#2a5f80" stroke-width="0.8"/></svg>
<svg style="position:absolute;left:31px;top:756px;" width="24" height="22" viewBox="0 0 24 22"><path d="M1 7L10 2L22 6V16L12 21L1 17Z" fill="#f2f2f2" stroke="#555" stroke-width="1.1"/><path d="M7 5C9 2 16 2 21 6V11C17 9 12 9 10 11Z" fill="#4a9ccb" stroke="#2a5f80" stroke-width="0.8"/><path d="M1 7L11 11V21" fill="none" stroke="#555"/></svg>
<svg style="position:absolute;left:31px;top:785px;" width="24" height="22" viewBox="0 0 24 22"><path d="M1 8L8 2L21 5V16L12 21L1 17Z" fill="#f2f2f2" stroke="#555" stroke-width="1.1"/><path d="M8 2L21 5L14 11L3 9Z" fill="#4a9ccb" stroke="#2a5f80" stroke-width="0.8"/><path d="M3 9L14 11V21" fill="none" stroke="#555"/></svg>
<svg style="position:absolute;left:10px;top:820px;" width="7" height="10" viewBox="0 0 7 10"><path d="M1 0L6 5L1 10Z" fill="#666"/></svg>
<svg style="position:absolute;left:30px;top:812px;" width="26" height="25" viewBox="0 0 26 25"><path d="M2 9L10 6L18 9V21L10 24L2 21Z" fill="#eee" stroke="#555" stroke-width="1.1"/><circle cx="10" cy="16" r="4" fill="#3d8fbf" stroke="#2a5f80"/><path d="M15 9L23 2" stroke="#222" stroke-width="2.2"/><circle cx="21" cy="3" r="1.5" fill="#f5a623"/><circle cx="16" cy="2.5" r="1" fill="#f5a623"/></svg>
<svg style="position:absolute;left:10px;top:849px;" width="7" height="10" viewBox="0 0 7 10"><path d="M1 0L6 5L1 10Z" fill="#666"/></svg>
<svg style="position:absolute;left:31px;top:843px;" width="24" height="22" viewBox="0 0 24 22"><path d="M11 2L17 0.8L22 3V19L16 21L11 18Z" fill="#f5f5f5" stroke="#555" stroke-width="1"/><path d="M16 1V21" stroke="#888" stroke-width="0.8"/><path d="M1 8L7 5.5L14 8L7 11Z" fill="#8fcbe8" stroke="#2a5f80" stroke-width="0.8"/><path d="M1 8L7 11V19L1 16Z" fill="#4a9ccb" stroke="#2a5f80" stroke-width="0.8"/><path d="M7 11L14 8V16L7 19Z" fill="#2f7bab" stroke="#2a5f80" stroke-width="0.8"/></svg>
<svg style="position:absolute;left:10px;top:878px;" width="7" height="10" viewBox="0 0 7 10"><path d="M1 0L6 5L1 10Z" fill="#666"/></svg>
<svg style="position:absolute;left:31px;top:872px;" width="24" height="22" viewBox="0 0 24 22"><path d="M11 2L17 0.8L22 3V19L16 21L11 18Z" fill="#f5f5f5" stroke="#555" stroke-width="1"/><path d="M16 1V21" stroke="#888" stroke-width="0.8"/><path d="M1 8L7 5.5L14 8L7 11Z" fill="#8fcbe8" stroke="#2a5f80" stroke-width="0.8"/><path d="M1 8L7 11V19L1 16Z" fill="#4a9ccb" stroke="#2a5f80" stroke-width="0.8"/><path d="M7 11L14 8V16L7 19Z" fill="#2f7bab" stroke="#2a5f80" stroke-width="0.8"/></svg>
<svg style="position:absolute;left:10px;top:906px;" width="7" height="10" viewBox="0 0 7 10"><path d="M1 0L6 5L1 10Z" fill="#666"/></svg>
<svg style="position:absolute;left:31px;top:900px;" width="24" height="22" viewBox="0 0 24 22"><path d="M11 2L17 0.8L22 3V19L16 21L11 18Z" fill="#f5f5f5" stroke="#555" stroke-width="1"/><path d="M16 1V21" stroke="#888" stroke-width="0.8"/><path d="M1 8L7 5.5L14 8L7 11Z" fill="#8fcbe8" stroke="#2a5f80" stroke-width="0.8"/><path d="M1 8L7 11V19L1 16Z" fill="#4a9ccb" stroke="#2a5f80" stroke-width="0.8"/><path d="M7 11L14 8V16L7 19Z" fill="#2f7bab" stroke="#2a5f80" stroke-width="0.8"/></svg>
<svg style="position:absolute;left:10px;top:935px;" width="7" height="10" viewBox="0 0 7 10"><path d="M1 0L6 5L1 10Z" fill="#666"/></svg>
<svg style="position:absolute;left:31px;top:929px;" width="24" height="22" viewBox="0 0 24 22"><path d="M11 2L17 0.8L22 3V19L16 21L11 18Z" fill="#f5f5f5" stroke="#555" stroke-width="1"/><path d="M16 1V21" stroke="#888" stroke-width="0.8"/><path d="M1 8L7 5.5L14 8L7 11Z" fill="#8fcbe8" stroke="#2a5f80" stroke-width="0.8"/><path d="M1 8L7 11V19L1 16Z" fill="#4a9ccb" stroke="#2a5f80" stroke-width="0.8"/><path d="M7 11L14 8V16L7 19Z" fill="#2f7bab" stroke="#2a5f80" stroke-width="0.8"/></svg>
<svg style="position:absolute;left:33px;top:958px;" width="21" height="22" viewBox="0 0 21 22"><path d="M1 1H6V4H8V7H6V9H1Z M11 1H16L19 4L16 7V9H11Z M1 12H6V15H8V18H6V20H1Z M11 12H16L19 15L16 18V20H11Z" fill="#fff" stroke="#2a6f98" stroke-width="1.2"/><rect x="1.5" y="1.5" width="4" height="7" fill="#4a9ccb"/></svg>
<svg style="position:absolute;left:10px;top:993px;" width="7" height="10" viewBox="0 0 7 10"><path d="M1 0L6 5L1 10Z" fill="#666"/></svg>
<svg style="position:absolute;left:31px;top:987px;" width="24" height="22" viewBox="0 0 24 22"><path d="M11 2L17 0.8L22 3V19L16 21L11 18Z" fill="#f5f5f5" stroke="#555" stroke-width="1"/><path d="M16 1V21" stroke="#888" stroke-width="0.8"/><path d="M1 8L7 5.5L14 8L7 11Z" fill="#8fcbe8" stroke="#2a5f80" stroke-width="0.8"/><path d="M1 8L7 11V19L1 16Z" fill="#4a9ccb" stroke="#2a5f80" stroke-width="0.8"/><path d="M7 11L14 8V16L7 19Z" fill="#2f7bab" stroke="#2a5f80" stroke-width="0.8"/></svg>
</div>
<div style="position:absolute;left:413px;top:560px;width:14px;height:58px;background:#f8f7fa;border:1px solid #8d8c91;border-left:none;box-sizing:border-box;"></div>
<svg style="position:absolute;left:415px;top:585px;" width="8" height="8" viewBox="0 0 8 8"><circle cx="4" cy="4" r="3.2" fill="#d0d0d0" stroke="#aaa"/></svg>
<div style="position:absolute;left:396px;top:318px;width:7px;height:523px;background:#8a898e;"></div>
<div style="position:absolute;left:26px;top:1005px;width:280px;height:8px;background:#8a898e;"></div>
<div style="position:absolute;left:0px;top:1024px;width:413px;height:1px;background:#d2d1d5;"></div>
<svg style="position:absolute;left:200px;top:1024px;" width="12" height="3" viewBox="0 0 12 3"><rect x="0" y="0" width="12" height="2" fill="#bbb"/></svg>
<div style="position:absolute;left:413px;top:1026px;width:1506px;height:1px;background:#a5a4a9;"></div>
<div style="position:absolute;left:0px;top:1027px;width:1919px;height:25px;background:#f8f7fa;"></div>
<div style="position:absolute;left:0px;top:1051px;width:1919px;height:1px;background:#a5a4a9;"></div>
<div style="position:absolute;left:2px;top:1027px;width:97px;height:24px;background:#9d9cb0;border:1px solid #6d6c80;box-sizing:border-box;"></div>
<div style="position:absolute;left:2px;top:1028px;width:1px;height:22px;background:#7e7d92;"></div>
<svg style="position:absolute;left:6px;top:1031px;" width="16" height="16" viewBox="0 0 16 16"><path d="M3 2V14M13 2L5 8L13 14Z" fill="#7a7990" stroke="#7a7990" stroke-width="1.2"/></svg>
<div style="position:absolute;left:26px;top:1028px;width:1px;height:22px;background:#7e7d92;"></div>
<svg style="position:absolute;left:30px;top:1031px;" width="16" height="16" viewBox="0 0 16 16"><path d="M12 2L4 8L12 14Z" fill="#7a7990" stroke="#7a7990" stroke-width="1.2"/></svg>
<div style="position:absolute;left:50px;top:1028px;width:1px;height:22px;background:#7e7d92;"></div>
<svg style="position:absolute;left:54px;top:1031px;" width="16" height="16" viewBox="0 0 16 16"><path d="M4 2L12 8L4 14Z" fill="#7a7990" stroke="#7a7990" stroke-width="1.2"/></svg>
<div style="position:absolute;left:74px;top:1028px;width:1px;height:22px;background:#7e7d92;"></div>
<svg style="position:absolute;left:78px;top:1031px;" width="16" height="16" viewBox="0 0 16 16"><path d="M3 2L11 8L3 14ZM13 2V14" fill="#7a7990" stroke="#7a7990" stroke-width="1.2"/></svg>
<div style="position:absolute;left:190px;top:1027px;width:173px;height:24px;background:#d9d8dc;border:1px solid #9f9ea3;box-sizing:border-box;"></div>
<div style="position:absolute;left:0px;top:1052px;width:1919px;height:25px;background:#e9e8ec;"></div>
<div style="position:absolute;left:0px;top:1077px;width:1919px;height:2px;background:#1a1a1a;"></div>
<div style="position:absolute;left:1640px;top:1056px;width:1px;height:20px;background:#dcdbe0;"></div>
<svg style="position:absolute;left:1857px;top:1063px;" width="10" height="6" viewBox="0 0 10 6"><path d="M1 5L5 1L9 5Z" fill="#333"/></svg>
<svg style="position:absolute;left:1894px;top:1055px;" width="24" height="20" viewBox="0 0 24 20"><path d="M2 9L12 3L22 8V12L12 18L2 13Z" fill="#fff" stroke="#444" stroke-width="1.3"/><path d="M2 9L12 14L22 8M12 14V18" fill="none" stroke="#444" stroke-width="1.1"/><path d="M9 7L14 10M12 5L17 8" stroke="#444"/></svg>
<svg style="position:absolute;left:0;top:0" width="1919" height="1079" viewBox="0 0 1919 1079"><defs>
<linearGradient id="gband" x1="952" y1="0" x2="1298" y2="0" gradientUnits="userSpaceOnUse">
 <stop offset="0" stop-color="#bdbcc0"/><stop offset="0.2" stop-color="#b2b1b5"/><stop offset="0.5" stop-color="#9d9ca0"/><stop offset="0.8" stop-color="#89888c"/><stop offset="1" stop-color="#7c7b7f"/></linearGradient>
<linearGradient id="gfront" x1="1114" y1="0" x2="1164" y2="0" gradientUnits="userSpaceOnUse">
 <stop offset="0" stop-color="#acabaf"/><stop offset="0.5" stop-color="#9a999d"/><stop offset="1" stop-color="#828185"/></linearGradient>
<linearGradient id="gright" x1="1266" y1="0" x2="1340" y2="0" gradientUnits="userSpaceOnUse">
 <stop offset="0" stop-color="#6f6e72"/><stop offset="0.7" stop-color="#858488"/><stop offset="1" stop-color="#7a797d"/></linearGradient>
<linearGradient id="gleft" x1="894" y1="0" x2="920" y2="0" gradientUnits="userSpaceOnUse">
 <stop offset="0" stop-color="#bdbcc0"/><stop offset="1" stop-color="#a9a8ac"/></linearGradient>
<linearGradient id="grim" x1="0" y1="330" x2="0" y2="532" gradientUnits="userSpaceOnUse">
 <stop offset="0" stop-color="#b7b6ba"/><stop offset="0.75" stop-color="#c6c5c9"/><stop offset="1" stop-color="#cbcace"/></linearGradient>
<linearGradient id="gfr" x1="0" y1="0" x2="0" y2="1">
 <stop offset="0" stop-color="#c5c4c8"/><stop offset="1" stop-color="#aaa9ad"/></linearGradient>
<linearGradient id="gfl" x1="0" y1="0" x2="0.3" y2="1">
 <stop offset="0" stop-color="#cfced2"/><stop offset="1" stop-color="#b9b8bc"/></linearGradient>
</defs><path d="M911.1 512.0 L928.2 504.1 L1113.8 634.0 L1133.0 873.0 L1052.0 840.0 L970.9 791.7 L896.0 747.6 L893.5 728.3 Z" fill="#a7a6aa"/><path d="M911.1 512.0 L917.8 521.9 L901.4 739.3 L893.5 728.3 Z" fill="url(#gleft)"/><path d="M1146.5 634.0 L1266.0 560.0 L1288.0 813.0 L1223.0 851.6 L1164.7 873.0 Z" fill="#6e6d71"/><path d="M1266 560 L1260 545 L1297.6 451.7 C1308 462 1315 475 1316.8 492 L1340 735 C1340 760 1325 780 1301.7 792 L1302.2 804.9 L1288 813 Z" fill="url(#gright)"/><path d="M1112.8 634.9 L1146.5 634 L1164.7 873 C1156 879 1141 879 1133 874 Z" fill="url(#gfront)"/><path d="M911.1 517.4 C911 505 916 497 924.5 494.5 L951.9 478.9 L1297.6 451.7 C1308 462 1315 475 1316.8 490 C1312 520 1290 538 1260 545 L1136 616.5 C1131 619 1127 619 1123 616.5 L928.2 504.1 Z" fill="#c4c3c7"/><path d="M928.2 504.1 L1123 616.5 C1118 622 1114 628 1112.8 634.9 L917.8 521.9 C915 514 921 505 928.2 504.1 Z" fill="url(#gfl)"/><path d="M1136 616.5 L1260 546.6 A172.7 99.3 0 0 0 1297.7 484.6 L1297.7 451.7 C1308 462 1315 475 1316.8 492 L1318 506 C1314 534 1295 553 1266 561 L1146.5 634 C1145 626 1141 620 1136 616.5 Z" fill="url(#gfr)"/><path d="M1123 616.5 C1127 619 1131 619 1136 616.5 C1141 620 1145 626 1146.5 634 C1136 640 1122 640 1112.8 634.9 C1114 628 1118 622 1123 616.5 Z" fill="#b3b2b6"/><path d="M924.5 494.5 L951.9 478.9 L951.9 484.8 L928.2 498.2 C926 500 926 502 928.2 504.1 C921 505 915 514 917.8 521.9 L911.1 517.4 C911 505 916 497 924.5 494.5 Z" fill="#b9b8bc"/><path d="M951.9 484.8 L928.2 498.2 C926 500 926 502 928.2 504.1" fill="none" stroke="#1c1c1c" stroke-width="1.2" stroke-linejoin="round" stroke-linecap="round"/><path d="M911.1 517.4 C914 521 916 522 917.8 521.9" fill="none" stroke="#1c1c1c" stroke-width="1.2" stroke-linejoin="round" stroke-linecap="round"/><path d="M893.5 728.3 L911.1 517.4 C911 505 916 497 924.5 494.5 L951.9 478.9" fill="none" stroke="#1c1c1c" stroke-width="1.2" stroke-linejoin="round" stroke-linecap="round"/><path d="M928.2 504.1 L1123 616.5 C1127 619 1131 619 1136 616.5 L1260 546.6" fill="none" stroke="#1c1c1c" stroke-width="1.2" stroke-linejoin="round" stroke-linecap="round"/><path d="M901.4 739.3 L917.8 521.9 C915 514 921 505 928.2 504.1" fill="none" stroke="#1c1c1c" stroke-width="1.2" stroke-linejoin="round" stroke-linecap="round"/><path d="M918 523 L1112.8 634.9 C1114 628 1118 622 1123 616.5 M1136 616.5 C1141 620 1145 626 1146.5 634 L1266 561 C1295 553 1314 534 1318 506" fill="none" stroke="#1c1c1c" stroke-width="1.2" stroke-linejoin="round" stroke-linecap="round"/><path d="M1112.8 634.9 L1133 873 M1146.5 634 L1164.7 873 M1112.8 634.9 C1122 640 1136 640 1146.5 634 M1266 561 L1288 813" fill="none" stroke="#1c1c1c" stroke-width="1.2" stroke-linejoin="round" stroke-linecap="round"/><path d="M1297.6 451.7 C1308 462 1315 475 1316.8 492 L1340 735 C1340 760 1325 780 1301.7 792" fill="none" stroke="#1c1c1c" stroke-width="1.2" stroke-linejoin="round" stroke-linecap="round"/><path d="M1223 851.6 L1302.2 804.9 M970.9 791.7 L1052 840" fill="none" stroke="#1c1c1c" stroke-width="1.2" stroke-linejoin="round" stroke-linecap="round"/><path d="M920 536.7 L1088 627 C1095 631 1099 637 1099.6 645 L1100.5 835 C1100.5 841 1097 844 1092 842 L930 750 C925 747 921.5 743 921.5 737 Z" transform="translate(6 -1.5)" fill="#bab9bd" stroke="#1c1c1c" stroke-width="1.1"/><path d="M1099.6 645 L1105.6 643.5 L1106.5 832.5 L1100.5 834 Z" fill="#807f83"/><path d="M1100.5 834 C1100.5 841 1097 844 1092 842 L1098 840.5 C1103 842.5 1106.5 839.5 1106.5 832.5 Z" fill="#807f83"/><path d="M920 536.7 L1088 627 C1095 631 1099 637 1099.6 645 L1100.5 835 C1100.5 841 1097 844 1092 842 L930 750 C925 747 921.5 743 921.5 737 Z" fill="#a6a5a9" stroke="#1c1c1c" stroke-width="1.2"/><path d="M1106.5 832.5 L1105.6 643.5" fill="none" stroke="#1c1c1c" stroke-width="1.2" stroke-linejoin="round" stroke-linecap="round"/><ellipse cx="1125" cy="484.6" rx="172.7" ry="99.3" fill="#8a898d" stroke="#1c1c1c" stroke-width="1.1"/><path d="M952.3 428 L952.3 479.1 A172.7 98.3 0 0 0 1297.7 479.1 L1297.7 428 Z" fill="url(#gband)" stroke="#1c1c1c" stroke-width="1.2"/><ellipse cx="1125" cy="428" rx="172.7" ry="104" fill="url(#grim)"/><path d="M952.3 428 A172.7 104 0 0 1 1297.7 428" fill="none" stroke="#1c1c1c" stroke-width="1.2"/><path d="M952.3 431.4 A172.7 98.3 0 0 0 1297.7 431.4" fill="none" stroke="#1c1c1c" stroke-width="1.2"/><ellipse cx="1125.5" cy="418.3" rx="158.5" ry="90" fill="#c2c1c5" stroke="#1c1c1c" stroke-width="1.2"/><path d="M817.6 735.4 L895.9 691.3 L893.5 728.3 C894 734 897 738 901.4 739.3 L968.4 780.3 L915.6 809.5 L817.6 755.1 Z" fill="#bcbbbf" stroke="#1c1c1c" stroke-width="1.2" stroke-linejoin="round"/><path d="M817.6 755.1 L915.6 809.5 L915.6 828.4 L817.6 773.2 Z" fill="#a4a3a7" stroke="#1c1c1c" stroke-width="1.2" stroke-linejoin="round"/><path d="M915.6 809.5 L968.4 780.3 L970.9 796.0 L915.6 828.4 Z" fill="#7d7c80" stroke="#1c1c1c" stroke-width="1.2" stroke-linejoin="round"/><path d="M1007.9 864.3 L1062.2 833.6 L1133 874 C1141 879 1156 879 1164.7 873 L1209.5 846.2 L1237.1 862.7 L1137 919.4 L1104.8 919.4 Z" fill="#bcbbbf" stroke="#1c1c1c" stroke-width="1.2" stroke-linejoin="round"/><path d="M1007.9 864.3 L1104.8 919.4 L1104.8 938.3 L1007.9 882.4 Z" fill="#a3a2a6" stroke="#1c1c1c" stroke-width="1.2" stroke-linejoin="round"/><path d="M1104.8 919.4 L1137.0 919.4 L1137.0 938.3 L1104.8 938.3 Z" fill="#8d8c90" stroke="#1c1c1c" stroke-width="1.2" stroke-linejoin="round"/><path d="M1137.0 919.4 L1237.1 862.7 L1237.1 880.0 L1137.0 938.3 Z" fill="#767579" stroke="#1c1c1c" stroke-width="1.2" stroke-linejoin="round"/><path d="M1338.4 678.3 L1431.8 730 L1431.8 750 L1330.9 807.6 L1301.7 791.8 C1325 780 1340 760 1340 735 Z" fill="#bcbbbf" stroke="#1c1c1c" stroke-width="1.2" stroke-linejoin="round"/><path d="M1301.7 791.8 L1330.9 807.6 L1330.9 826.8 L1301.7 809.3 Z" fill="#a3a2a6" stroke="#1c1c1c" stroke-width="1.2" stroke-linejoin="round"/><path d="M1330.9 807.6 L1431.8 750.0 L1431.8 768.4 L1330.9 826.8 Z" fill="#767579" stroke="#1c1c1c" stroke-width="1.2" stroke-linejoin="round"/><clipPath id="hc0"><ellipse cx="863.6" cy="742.3" rx="18.4" ry="10.8"/></clipPath><ellipse cx="863.6" cy="742.3" rx="18.4" ry="10.8" fill="#7d7c80"/><g clip-path="url(#hc0)"><ellipse cx="863.6" cy="750.8" rx="17.6" ry="8.6" fill="#c4c3c7" stroke="#1c1c1c" stroke-width="1.2"/><ellipse cx="863.6" cy="751.8" rx="9.2" ry="5.6" fill="#8b8a8e" stroke="#1c1c1c" stroke-width="1.1"/></g><ellipse cx="863.6" cy="742.3" rx="18.4" ry="10.8" fill="none" stroke="#1c1c1c" stroke-width="1.3"/><clipPath id="hc1"><ellipse cx="1124.8" cy="893.8" rx="18.4" ry="10.8"/></clipPath><ellipse cx="1124.8" cy="893.8" rx="18.4" ry="10.8" fill="#7d7c80"/><g clip-path="url(#hc1)"><ellipse cx="1124.8" cy="902.3" rx="17.6" ry="8.6" fill="#c4c3c7" stroke="#1c1c1c" stroke-width="1.2"/><ellipse cx="1124.8" cy="903.3" rx="9.2" ry="5.6" fill="#8b8a8e" stroke="#1c1c1c" stroke-width="1.1"/></g><ellipse cx="1124.8" cy="893.8" rx="18.4" ry="10.8" fill="none" stroke="#1c1c1c" stroke-width="1.3"/><clipPath id="hc2"><ellipse cx="1386.4" cy="742.8" rx="18.4" ry="10.8"/></clipPath><ellipse cx="1386.4" cy="742.8" rx="18.4" ry="10.8" fill="#7d7c80"/><g clip-path="url(#hc2)"><ellipse cx="1386.4" cy="751.3" rx="17.6" ry="8.6" fill="#c4c3c7" stroke="#1c1c1c" stroke-width="1.2"/><ellipse cx="1386.4" cy="752.3" rx="9.2" ry="5.6" fill="#8b8a8e" stroke="#1c1c1c" stroke-width="1.1"/></g><ellipse cx="1386.4" cy="742.8" rx="18.4" ry="10.8" fill="none" stroke="#1c1c1c" stroke-width="1.3"/><ellipse cx="1019" cy="650" rx="11.5" ry="16" transform="rotate(-28 1019 650)" fill="#b80808" stroke="#2a0000" stroke-width="1.2"/><path d="M1003 643 L1017 634 L1030 660 L1013 672 Z" fill="#c01010"/><ellipse cx="1005.5" cy="657" rx="12" ry="17" transform="rotate(-28 1005.5 657)" fill="#a80404" stroke="#2a0000" stroke-width="1.3"/><path d="M928.8 702 L935.8 688.4 L941 686.6 L993 715.2 L995.7 718.7 L995.7 766.3 L992.2 768 L981.6 764.5 L937.6 738 L928.8 729.3 Z" fill="#262626" stroke="#0c0c0c" stroke-width="1"/><path d="M935.8 688.4 L941 686.6 L993 715.2 L988 717 Z" fill="#3a3a3a"/><path d="M988 717 L995.7 718.7 L995.7 766.3 L989 764 Z" fill="#1c1c1c"/><path d="M1010.0 720.8 L1009.4 729.9 L1026.4 720.4 L1027.0 711.3 Z" fill="#8f9618" stroke="#2a2a00" stroke-width="0.8" stroke-linejoin="round"/><path d="M997.6 715.9 L1004.1 713.8 L1021.1 704.3 L1014.6 706.4 Z" fill="#c2ca36" stroke="#2a2a00" stroke-width="0.8" stroke-linejoin="round"/><path d="M1004.1 713.8 L1010.0 720.8 L1027.0 711.3 L1021.1 704.3 Z" fill="#a8b020" stroke="#2a2a00" stroke-width="0.8" stroke-linejoin="round"/><path d="M1010.0 720.8 L1009.4 729.9 L1002.9 732.0 L997.0 725.0 L997.6 715.9 L1004.1 713.8 Z" fill="#a8b022" stroke="#2a2a00" stroke-width="0.9"/><ellipse cx="1003.5" cy="722.9" rx="4.6" ry="7" transform="rotate(-18 1003.5 722.9)" fill="#cfd74a" stroke="#3a3a00" stroke-width="0.7"/><path d="M1010.0 758.4 L1009.4 767.5 L1026.4 758.0 L1027.0 748.9 Z" fill="#8f9618" stroke="#2a2a00" stroke-width="0.8" stroke-linejoin="round"/><path d="M997.6 753.5 L1004.1 751.4 L1021.1 741.9 L1014.6 744.0 Z" fill="#c2ca36" stroke="#2a2a00" stroke-width="0.8" stroke-linejoin="round"/><path d="M1004.1 751.4 L1010.0 758.4 L1027.0 748.9 L1021.1 741.9 Z" fill="#a8b020" stroke="#2a2a00" stroke-width="0.8" stroke-linejoin="round"/><path d="M1010.0 758.4 L1009.4 767.5 L1002.9 769.6 L997.0 762.6 L997.6 753.5 L1004.1 751.4 Z" fill="#a8b022" stroke="#2a2a00" stroke-width="0.9"/><ellipse cx="1003.5" cy="760.5" rx="4.6" ry="7" transform="rotate(-18 1003.5 760.5)" fill="#cfd74a" stroke="#3a3a00" stroke-width="0.7"/></svg>
<div style="position:absolute;left:0;top:0;opacity:0.78"><svg style="position:absolute;left:970px;top:160px;" width="24" height="24" viewBox="0 0 24 24"><circle cx="14" cy="9" r="7.5" fill="#eef3f6" stroke="#555" stroke-width="1.3"/><path d="M14 4V6M14 12V14M9 9H11M17 9H19" stroke="#555" stroke-width="1.4"/><path d="M9 14L2 21" stroke="#4b9fcf" stroke-width="3.5" stroke-linecap="round"/></svg>
<svg style="position:absolute;left:1000px;top:160px;" width="25" height="24" viewBox="0 0 25 24"><rect x="10" y="1" width="13" height="13" fill="none" stroke="#555" stroke-width="1.2" stroke-dasharray="2 1.5"/><circle cx="12" cy="11" r="7" fill="#eef3f6" stroke="#555" stroke-width="1.3"/><path d="M7 16L2 22" stroke="#4b9fcf" stroke-width="3.5" stroke-linecap="round"/></svg>
<svg style="position:absolute;left:1032px;top:160px;" width="24" height="24" viewBox="0 0 24 24"><path d="M3 14L15 3L21 7L10 19Z" fill="#e6e6e6" stroke="#666" stroke-width="1.2"/><path d="M11 19H22M15 15L11 19L15 22" fill="none" stroke="#4b9fcf" stroke-width="2.4"/></svg>
<svg style="position:absolute;left:1063px;top:161px;" width="24" height="23" viewBox="0 0 24 23"><path d="M2 6L8 3V19L2 22Z" fill="#4b9fcf" stroke="#444"/><path d="M16 3L22 6V22L16 19Z" fill="#4b9fcf" stroke="#444"/><path d="M8 3C11 1 13 1 16 3V19C13 17 11 17 8 19" fill="#eee" stroke="#444"/><path d="M3 12L7 9M3 17L7 14M17 12L21 9M17 17L21 14" stroke="#222"/></svg>
<svg style="position:absolute;left:1095px;top:160px;" width="23" height="24" viewBox="0 0 23 24"><path d="M1 7L7 1H22V16L16 22H1Z" fill="#fff" stroke="#444" stroke-width="1.2"/><rect x="1" y="7" width="15" height="15" fill="#8fcbe8" stroke="#444" stroke-width="1.2"/><path d="M16 7L22 1M19 5V13M17 11L19 13L21 11" fill="none" stroke="#444"/></svg>
<svg style="position:absolute;left:1126.5px;top:170px;" width="7.0" height="3.5" viewBox="0 0 7.0 3.5"><path d="M0 0H7.0L3.5 3.5Z" fill="#999"/></svg>
<svg style="position:absolute;left:1144px;top:160px;" width="23" height="24" viewBox="0 0 23 24"><path d="M2 5L10 1L21 4V19L13 23L2 19Z" fill="#b8dff0" stroke="#555" stroke-width="1.1"/><path d="M13 8V23M13 8L21 4" fill="none" stroke="#555"/><path d="M13 8L21 4V19L13 23Z" fill="#eef7fb"/><path d="M2 5L13 8" stroke="#555"/></svg>
<svg style="position:absolute;left:1174.5px;top:170px;" width="7.0" height="3.5" viewBox="0 0 7.0 3.5"><path d="M0 0H7.0L3.5 3.5Z" fill="#999"/></svg>
<svg style="position:absolute;left:1191px;top:162px;" width="23" height="20" viewBox="0 0 23 20"><path d="M1 10C5 3 18 3 22 10C18 17 5 17 1 10Z" fill="#eee" stroke="#999" stroke-width="1.2"/><circle cx="11.5" cy="10" r="4.5" fill="#555"/><path d="M11.5 2V18" stroke="#888" stroke-width="1.2"/></svg>
<svg style="position:absolute;left:1222.5px;top:170px;" width="7.0" height="3.5" viewBox="0 0 7.0 3.5"><path d="M0 0H7.0L3.5 3.5Z" fill="#999"/></svg>
<svg style="position:absolute;left:1239px;top:159px;" width="25" height="26" viewBox="0 0 25 26"><circle cx="10" cy="10" r="9" fill="#e53a2a"/><path d="M10 10V1A9 9 0 0 0 1 10Z" fill="#2f6fd0"/><path d="M10 10H1A9 9 0 0 0 10 19Z" fill="#3cb043"/><path d="M10 21L21 10L24 13L13 24Z" fill="#f2cf3c" stroke="#555"/><path d="M10 21L9 25L13 24" fill="#333"/></svg>
<svg style="position:absolute;left:1269px;top:159px;" width="25" height="26" viewBox="0 0 25 26"><g transform="translate(2 0)"><circle cx="10" cy="10" r="9" fill="#e53a2a"/><path d="M10 10V1A9 9 0 0 0 1 10Z" fill="#2f6fd0"/><path d="M10 10H1A9 9 0 0 0 10 19Z" fill="#3cb043"/></g><path d="M1 16H24V26H1Z" fill="#222"/><path d="M3 18H7V21H3ZM10 18H14V21H10ZM17 18H21V21H17ZM6 22H10V25H6ZM13 22H17V25H13Z" fill="#fff"/><path d="M9 18L20 8L22 10L12 20Z" fill="#f2cf3c"/></svg>
<svg style="position:absolute;left:1301.5px;top:170px;" width="7.0" height="3.5" viewBox="0 0 7.0 3.5"><path d="M0 0H7.0L3.5 3.5Z" fill="#999"/></svg>
<svg style="position:absolute;left:1318px;top:161px;" width="23" height="22" viewBox="0 0 23 22"><rect x="1" y="1" width="21" height="15" fill="#f6f6f6" stroke="#555" stroke-width="1.3"/><path d="M11.5 16V20M6 20.5H17" stroke="#555" stroke-width="1.8"/></svg>
<svg style="position:absolute;left:1349.5px;top:170px;" width="7.0" height="3.5" viewBox="0 0 7.0 3.5"><path d="M0 0H7.0L3.5 3.5Z" fill="#999"/></svg>
</div>
<svg style="position:absolute;left:1763px;top:164px;" width="16" height="16" viewBox="0 0 16 16"><rect x="1" y="1" width="14" height="14" fill="none" stroke="#999" stroke-width="1.1"/><path d="M5 1V15" stroke="#999"/><path d="M10 5L7 8L10 11Z" fill="#999"/></svg>
<svg style="position:absolute;left:1795px;top:164px;" width="16" height="16" viewBox="0 0 16 16"><rect x="1" y="1" width="14" height="14" fill="none" stroke="#999" stroke-width="1.1"/><path d="M11 1V15" stroke="#999"/><path d="M6 5L9 8L6 11Z" fill="#999"/></svg>
<div style="position:absolute;left:1828px;top:177px;width:13px;height:1.5px;background:#888;"></div>
<svg style="position:absolute;left:1857px;top:164px;" width="17" height="16" viewBox="0 0 17 16"><rect x="1" y="5" width="10" height="10" fill="none" stroke="#999" stroke-width="1.2"/><path d="M5 5V1H16V11H11" fill="none" stroke="#999" stroke-width="1.2"/></svg>
<svg style="position:absolute;left:1889px;top:165px;" width="14" height="14" viewBox="0 0 14 14"><path d="M1 1L13 13M13 1L1 13" stroke="#999" stroke-width="1.4"/></svg>
<div style="position:absolute;left:1880px;top:222px;width:39px;height:290px;background:#d9d8dc;border:1px solid #a5a4a9;border-right:none;box-sizing:border-box;"></div>
<div style="position:absolute;left:1880px;top:258px;width:39px;height:1px;background:#a5a4a9;"></div>
<div style="position:absolute;left:1880px;top:294px;width:39px;height:1px;background:#a5a4a9;"></div>
<div style="position:absolute;left:1880px;top:330px;width:39px;height:1px;background:#a5a4a9;"></div>
<div style="position:absolute;left:1880px;top:366px;width:39px;height:1px;background:#a5a4a9;"></div>
<div style="position:absolute;left:1880px;top:402px;width:39px;height:1px;background:#a5a4a9;"></div>
<div style="position:absolute;left:1881px;top:439px;width:38px;height:35px;background:#f8f7fa;"></div>
<div style="position:absolute;left:1880px;top:438px;width:39px;height:1px;background:#a5a4a9;"></div>
<div style="position:absolute;left:1880px;top:474px;width:39px;height:1px;background:#a5a4a9;"></div>
<svg style="position:absolute;left:1889px;top:228px;" width="23" height="23" viewBox="0 0 23 23"><rect x="1" y="2" width="16" height="13" fill="#fff" stroke="#444" stroke-width="1.2"/><rect x="1" y="2" width="16" height="3" fill="#3d8fbf"/><path d="M3 8H10M3 11H9" stroke="#444"/><path d="M11 10L17 7L22 10V17L16 21L10 17Z" fill="#f2cf3c" stroke="#8f7a16"/><path d="M15 9L19 7L22 9L18 11Z" fill="#5aaad6"/></svg>
<svg style="position:absolute;left:1889px;top:264px;" width="23" height="23" viewBox="0 0 23 23"><path d="M3 6L8 3V21L3 23Z M8 3L13 1V19L8 21Z M13 1L17 3V21L13 19Z" fill="#fafafa" stroke="#555" stroke-width="1.2"/><path d="M3 6L8 3L13 1L18 3" fill="none" stroke="#555"/></svg>
<svg style="position:absolute;left:1889px;top:300px;" width="23" height="23" viewBox="0 0 23 23"><path d="M2 5H8L10 7H18V11H2Z" fill="#fff" stroke="#444" stroke-width="1.3"/><path d="M2 20L5 11H22L19 20Z" fill="#f4f4f4" stroke="#444" stroke-width="1.3"/><path d="M2 5V20" stroke="#444" stroke-width="1.3"/></svg>
<svg style="position:absolute;left:1889px;top:336px;" width="23" height="23" viewBox="0 0 23 23"><rect x="2" y="2" width="19" height="19" fill="#fff" stroke="#444" stroke-width="1.3"/><path d="M5 5H11V8H8V11H15V13H5Z" fill="#f2cf3c" stroke="#8f7a16"/><rect x="14" y="5" width="4" height="4" fill="#f2cf3c" stroke="#8f7a16"/><rect x="16" y="13" width="3" height="6" fill="#ccc"/></svg>
<svg style="position:absolute;left:1889px;top:372px;" width="23" height="23" viewBox="0 0 23 23"><circle cx="11.5" cy="11.5" r="10" fill="#e53a2a"/><path d="M11.5 11.5V1.5A10 10 0 0 0 1.5 11.5Z" fill="#2f6fd0"/><path d="M11.5 11.5H1.5A10 10 0 0 0 11.5 21.5Z" fill="#3cb043"/><path d="M11.5 11.5V21.5A10 10 0 0 0 21.5 11.5Z" fill="#f5c400"/></svg>
<svg style="position:absolute;left:1889px;top:408px;" width="23" height="23" viewBox="0 0 23 23"><rect x="2" y="2" width="19" height="19" fill="#fff" stroke="#2a5f80" stroke-width="1.4"/><rect x="2" y="2" width="19" height="4" fill="#3d8fbf"/><rect x="4" y="9" width="4" height="2.5" fill="#3d8fbf"/><rect x="4" y="14" width="4" height="2.5" fill="#3d8fbf"/><path d="M10 10H19M10 15H19" stroke="#333" stroke-width="1.2"/></svg>
<svg style="position:absolute;left:1889px;top:444px;" width="23" height="23" viewBox="0 0 23 23"><path d="M1 11L11.5 2L22 11" fill="none" stroke="#3a7fa8" stroke-width="3" stroke-linejoin="round"/><path d="M4 10V21H19V10" fill="none" stroke="#444" stroke-width="1.6"/><rect x="9" y="13" width="5" height="8" fill="none" stroke="#444" stroke-width="1.4"/></svg>
<svg style="position:absolute;left:1889px;top:481px;" width="23" height="23" viewBox="0 0 23 23"><path d="M1 2H14V12H7L4 15V12H1Z" fill="#5aaad6" stroke="#2a5f80" stroke-width="1.1"/><path d="M9 8H22V18H19V21L16 18H9Z" fill="#fff" stroke="#555" stroke-width="1.1"/></svg>
<div style="position:absolute;left:426px;top:197px;width:269px;height:167px;box-sizing:border-box;background:#045a8c;border:2px solid #1aa39a;border-radius:7px"></div>
<svg style="position:absolute;left:462px;top:888px;" width="60" height="84" viewBox="0 0 60 84"><path d="M12 57L40 41" stroke="#f4a0a0" stroke-width="3.5"/><circle cx="39.5" cy="41" r="4" fill="#c41010"/><path d="M42 38L47 37L44 42Z" fill="#f4a0a0"/><path d="M12 57V25" stroke="#1a6e1a" stroke-width="4.5"/><path d="M7 29H17L12 22Z" fill="#1a6e1a"/><path d="M12 22L9.5 28H14.5Z" fill="#7fd07f"/><path d="M13 57V44" stroke="#9fe09f" stroke-width="1.5"/><path d="M12 57L38 71" stroke="#101090" stroke-width="4.5"/><path d="M33 66L44 75L34 74Z" fill="#101090"/><text x="14" y="15" font-family="Liberation Sans" font-size="10" fill="#3a8a3a" text-anchor="middle">Y</text><text x="51" y="35" font-family="Liberation Sans" font-size="10" fill="#e07080" text-anchor="middle">X</text><text x="50" y="79" font-family="Liberation Sans" font-size="10" fill="#3030b0" text-anchor="middle">Z</text></svg>
<svg style="position:absolute;left:0;top:0" width="1919" height="1079" viewBox="0 0 1919 1079" font-family="Liberation Sans"><defs><clipPath id="treeclip"><rect x="0" y="0" width="413" height="996"/></clipPath></defs><text x="36.30" y="29.80" font-size="15.41" fill="#c9343c" font-weight="bold" font-style="italic" textLength="45.31" lengthAdjust="spacingAndGlyphs">SOLID</text><text x="83.90" y="29.80" font-size="15.41" fill="#c9343c" font-style="italic" textLength="49.77" lengthAdjust="spacingAndGlyphs">WORKS</text><text x="920.60" y="31.00" font-size="17.73" fill="#333" textLength="249.19" lengthAdjust="spacingAndGlyphs">Abfan16_base.SLDPRT [Read-only]</text><text x="1362.80" y="31.00" font-size="15.41" fill="#707070" textLength="128.99" lengthAdjust="spacingAndGlyphs">Search Commands</text><text x="17.70" y="97.00" font-size="17.01" fill="#333" textLength="62.86" lengthAdjust="spacingAndGlyphs">Extruded</text><text x="14.20" y="119.50" font-size="17.01" fill="#333" textLength="71.51" lengthAdjust="spacingAndGlyphs">Boss/Base</text><text x="102.20" y="97.00" font-size="17.01" fill="#333" textLength="65.19" lengthAdjust="spacingAndGlyphs">Revolved</text><text x="99.00" y="119.50" font-size="17.01" fill="#333" textLength="72.21" lengthAdjust="spacingAndGlyphs">Boss/Base</text><text x="212.10" y="70.80" font-size="17.01" fill="#333" textLength="121.26" lengthAdjust="spacingAndGlyphs">Swept Boss/Base</text><text x="212.10" y="102.00" font-size="17.01" fill="#333" textLength="123.38" lengthAdjust="spacingAndGlyphs">Lofted Boss/Base</text><text x="212.10" y="132.90" font-size="17.01" fill="#333" textLength="147.19" lengthAdjust="spacingAndGlyphs">Boundary Boss/Base</text><text x="382.50" y="97.00" font-size="17.01" fill="#333" textLength="62.96" lengthAdjust="spacingAndGlyphs">Extruded</text><text x="401.60" y="119.50" font-size="17.01" fill="#333" textLength="25.02" lengthAdjust="spacingAndGlyphs">Cut</text><text x="467.90" y="97.00" font-size="17.01" fill="#333" textLength="32.13" lengthAdjust="spacingAndGlyphs">Hole</text><text x="459.30" y="119.50" font-size="17.01" fill="#333" textLength="48.72" lengthAdjust="spacingAndGlyphs">Wizard</text><text x="521.70" y="97.00" font-size="17.01" fill="#333" textLength="64.29" lengthAdjust="spacingAndGlyphs">Revolved</text><text x="540.70" y="119.50" font-size="17.01" fill="#333" textLength="25.22" lengthAdjust="spacingAndGlyphs">Cut</text><text x="627.50" y="70.80" font-size="17.01" fill="#333" textLength="73.47" lengthAdjust="spacingAndGlyphs">Swept Cut</text><text x="627.50" y="102.00" font-size="17.01" fill="#333" textLength="76.49" lengthAdjust="spacingAndGlyphs">Lofted Cut</text><text x="627.50" y="132.90" font-size="17.01" fill="#333" textLength="100.50" lengthAdjust="spacingAndGlyphs">Boundary Cut</text><text x="750.00" y="97.00" font-size="17.01" fill="#333" textLength="32.52" lengthAdjust="spacingAndGlyphs">Fillet</text><text x="801.00" y="97.00" font-size="17.01" fill="#333" textLength="43.00" lengthAdjust="spacingAndGlyphs">Linear</text><text x="796.00" y="119.50" font-size="17.01" fill="#333" textLength="52.99" lengthAdjust="spacingAndGlyphs">Pattern</text><text x="889.50" y="70.80" font-size="17.01" fill="#333" textLength="21.51" lengthAdjust="spacingAndGlyphs">Rib</text><text x="889.50" y="102.00" font-size="17.01" fill="#333" textLength="36.53" lengthAdjust="spacingAndGlyphs">Draft</text><text x="889.50" y="132.90" font-size="17.01" fill="#333" textLength="32.48" lengthAdjust="spacingAndGlyphs">Shell</text><text x="972.00" y="70.80" font-size="17.01" fill="#333" textLength="39.02" lengthAdjust="spacingAndGlyphs">Wrap</text><text x="972.00" y="102.00" font-size="17.01" fill="#333" textLength="63.00" lengthAdjust="spacingAndGlyphs">Intersect</text><text x="972.00" y="132.90" font-size="17.01" fill="#333" textLength="46.01" lengthAdjust="spacingAndGlyphs">Mirror</text><text x="1059.00" y="97.00" font-size="17.01" fill="#333" textLength="69.98" lengthAdjust="spacingAndGlyphs">Reference</text><text x="1057.00" y="119.50" font-size="17.01" fill="#333" textLength="73.00" lengthAdjust="spacingAndGlyphs">Geometry</text><text x="1142.50" y="97.00" font-size="17.01" fill="#333" textLength="49.46" lengthAdjust="spacingAndGlyphs">Curves</text><text x="1209.00" y="97.00" font-size="17.01" fill="#333" textLength="72.01" lengthAdjust="spacingAndGlyphs">Instant3D</text><text x="107.80" y="176.00" font-size="18.90" fill="#3a3a3a" textLength="49.34" lengthAdjust="spacingAndGlyphs">Sketch</text><text x="182.40" y="176.00" font-size="18.90" fill="#3a3a3a" textLength="59.59" lengthAdjust="spacingAndGlyphs">Markup</text><text x="265.70" y="176.00" font-size="18.90" fill="#3a3a3a" textLength="66.33" lengthAdjust="spacingAndGlyphs">Evaluate</text><text x="356.50" y="176.00" font-size="18.90" fill="#3a3a3a" textLength="136.19" lengthAdjust="spacingAndGlyphs">MBD Dimensions</text><text x="520.80" y="176.00" font-size="18.90" fill="#3a3a3a" textLength="177.17" lengthAdjust="spacingAndGlyphs">SOLIDWORKS Add-Ins</text><text x="12.40" y="176.00" font-size="18.90" fill="#333" font-weight="bold" textLength="70.88" lengthAdjust="spacingAndGlyphs">Features</text><text x="32.50" y="312.60" font-size="18.75" fill="#333" textLength="353.02" lengthAdjust="spacingAndGlyphs">Abfan16_base (Default) &lt;&lt;Default&gt;_Display</text><text x="60.90" y="342.00" font-size="19.04" fill="#333" clip-path="url(#treeclip)" textLength="55.12" lengthAdjust="spacingAndGlyphs">History</text><text x="60.90" y="370.80" font-size="19.04" fill="#333" clip-path="url(#treeclip)" textLength="58.98" lengthAdjust="spacingAndGlyphs">Sensors</text><text x="60.90" y="399.60" font-size="19.04" fill="#333" clip-path="url(#treeclip)" textLength="94.73" lengthAdjust="spacingAndGlyphs">Annotations</text><text x="60.90" y="428.40" font-size="19.04" fill="#333" clip-path="url(#treeclip)" textLength="119.93" lengthAdjust="spacingAndGlyphs">Solid Bodies(5)</text><text x="60.90" y="457.20" font-size="19.04" fill="#333" clip-path="url(#treeclip)" textLength="77.06" lengthAdjust="spacingAndGlyphs">Equations</text><text x="60.90" y="486.00" font-size="19.04" fill="#333" clip-path="url(#treeclip)" textLength="195.14" lengthAdjust="spacingAndGlyphs">Material &lt;not specified&gt;</text><text x="60.90" y="514.80" font-size="19.04" fill="#333" clip-path="url(#treeclip)" textLength="87.49" lengthAdjust="spacingAndGlyphs">Front Plane</text><text x="60.90" y="543.60" font-size="19.04" fill="#333" clip-path="url(#treeclip)" textLength="78.36" lengthAdjust="spacingAndGlyphs">Top Plane</text><text x="60.90" y="572.40" font-size="19.04" fill="#333" clip-path="url(#treeclip)" textLength="88.80" lengthAdjust="spacingAndGlyphs">Right Plane</text><text x="60.90" y="601.20" font-size="19.04" fill="#333" clip-path="url(#treeclip)" textLength="48.06" lengthAdjust="spacingAndGlyphs">Origin</text><text x="60.90" y="630.00" font-size="19.04" fill="#333" clip-path="url(#treeclip)" textLength="110.38" lengthAdjust="spacingAndGlyphs">Boss-Extrude1</text><text x="60.90" y="658.80" font-size="19.04" fill="#333" clip-path="url(#treeclip)" textLength="111.38" lengthAdjust="spacingAndGlyphs">Boss-Extrude2</text><text x="60.90" y="687.60" font-size="19.04" fill="#333" clip-path="url(#treeclip)" textLength="111.38" lengthAdjust="spacingAndGlyphs">Boss-Extrude3</text><text x="60.90" y="716.40" font-size="19.04" fill="#333" clip-path="url(#treeclip)" textLength="47.27" lengthAdjust="spacingAndGlyphs">Draft1</text><text x="60.90" y="745.20" font-size="19.04" fill="#333" clip-path="url(#treeclip)" textLength="111.38" lengthAdjust="spacingAndGlyphs">Boss-Extrude4</text><text x="60.90" y="774.00" font-size="19.04" fill="#333" clip-path="url(#treeclip)" textLength="45.46" lengthAdjust="spacingAndGlyphs">Fillet1</text><text x="60.90" y="802.80" font-size="19.04" fill="#333" clip-path="url(#treeclip)" textLength="74.11" lengthAdjust="spacingAndGlyphs">Chamfer1</text><text x="60.90" y="831.60" font-size="19.04" fill="#333" clip-path="url(#treeclip)" textLength="251.12" lengthAdjust="spacingAndGlyphs">CBORE for M12 Hex Head Bolt1</text><text x="60.90" y="860.40" font-size="19.04" fill="#333" clip-path="url(#treeclip)" textLength="111.38" lengthAdjust="spacingAndGlyphs">Boss-Extrude5</text><text x="60.90" y="889.20" font-size="19.04" fill="#333" clip-path="url(#treeclip)" textLength="111.38" lengthAdjust="spacingAndGlyphs">Boss-Extrude6</text><text x="60.90" y="918.00" font-size="19.04" fill="#333" clip-path="url(#treeclip)" textLength="111.38" lengthAdjust="spacingAndGlyphs">Boss-Extrude7</text><text x="60.90" y="946.80" font-size="19.04" fill="#333" clip-path="url(#treeclip)" textLength="111.38" lengthAdjust="spacingAndGlyphs">Boss-Extrude8</text><text x="60.90" y="975.60" font-size="19.04" fill="#333" clip-path="url(#treeclip)" textLength="70.83" lengthAdjust="spacingAndGlyphs">LPattern1</text><text x="60.90" y="1004.40" font-size="19.04" fill="#333" clip-path="url(#treeclip)" textLength="111.38" lengthAdjust="spacingAndGlyphs">Boss-Extrude9</text><text x="118.80" y="1046.40" font-size="19.48" fill="#111" font-weight="bold" textLength="56.78" lengthAdjust="spacingAndGlyphs">Model</text><text x="207.50" y="1046.40" font-size="19.19" fill="#333" textLength="126.21" lengthAdjust="spacingAndGlyphs">Motion Study 1</text><text x="2.00" y="1073.70" font-size="18.60" fill="#222" textLength="108.38" lengthAdjust="spacingAndGlyphs">SOLIDWORKS</text><text x="1475.90" y="1073.50" font-size="18.46" fill="#333" textLength="109.43" lengthAdjust="spacingAndGlyphs">Radius: 10mm</text><text x="1776.00" y="1073.50" font-size="18.46" fill="#333" textLength="50.02" lengthAdjust="spacingAndGlyphs">MMGS</text><text x="442.30" y="269.60" font-size="42.73" fill="#ffffff" stroke="#ffffff" stroke-width="1.1" stroke-linejoin="round" textLength="237.04" lengthAdjust="spacingAndGlyphs">Configurations</text><text x="509.10" y="322.20" font-size="44.19" fill="#ffffff" stroke="#ffffff" stroke-width="1.1" stroke-linejoin="round" textLength="103.33" lengthAdjust="spacingAndGlyphs">Tables</text></svg>
<svg style="position:absolute;left:134px;top:244px;" width="34" height="50" viewBox="0 0 34 50"><path d="M3 2V38L12 30L19 46L26 43L19 28H31Z" fill="#fff" stroke="#111" stroke-width="2.2" stroke-linejoin="round"/></svg>
</body></html>
